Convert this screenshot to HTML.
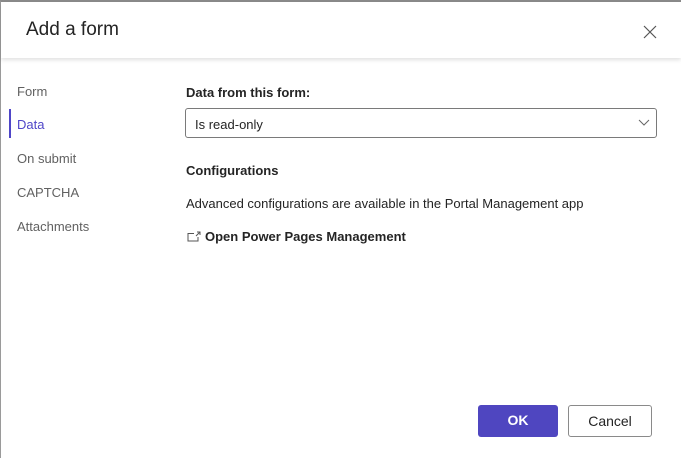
<!DOCTYPE html>
<html><head><style>
html,body{margin:0;padding:0;}
body{width:681px;height:458px;overflow:hidden;background:#fff;font-family:"Segoe UI","Liberation Sans",sans-serif;color:#242424;position:relative;}
.frame{position:absolute;left:0;top:0;width:681px;height:458px;box-sizing:border-box;border-top:2px solid #8a8a8a;border-left:1px solid #9a9a9a;}
.hdr{position:absolute;left:1px;top:2px;width:680px;height:56px;box-shadow:0 2px 4px rgba(0,0,0,0.12);background:#fff;}
.title{position:absolute;left:25px;top:17px;font-size:19px;color:#242424;}
.close{position:absolute;left:642px;top:23px;}
.nav{position:absolute;left:17px;font-size:13px;color:#616161;}
.bar{position:absolute;left:9px;top:109px;width:2px;height:29px;background:#4f46c8;}
.t{position:absolute;left:186px;font-size:13px;}
.dd{position:absolute;left:185px;top:108px;width:472px;height:30px;box-sizing:border-box;border:1px solid #7a7a7a;border-radius:3px;}
.btn{position:absolute;top:405px;height:32px;box-sizing:border-box;border-radius:3px;font-size:14px;text-align:center;line-height:31px;}
</style></head><body>
<div class="frame"></div>
<div class="hdr"><div class="title">Add a form</div>
<svg class="close" width="14" height="14" viewBox="0 0 14 14"><path d="M1 1L13 13M13 1L1 13" stroke="#555" stroke-width="1.2"/></svg></div>
<div class="nav" style="top:84px">Form</div>
<div class="bar"></div>
<div class="nav" style="top:117px;color:#4f46c8">Data</div>
<div class="nav" style="top:151px">On submit</div>
<div class="nav" style="top:185px">CAPTCHA</div>
<div class="nav" style="top:219px">Attachments</div>
<div class="t" style="top:85px;font-weight:600">Data from this form:</div>
<div class="dd"><span style="position:absolute;left:9px;top:8px;font-size:13px">Is read-only</span>
<svg style="position:absolute;left:452px;top:10px" width="12" height="8" viewBox="0 0 12 8"><path d="M1 1L6 6L11 1" stroke="#666" fill="none" stroke-width="1"/></svg></div>
<div class="t" style="top:163px;font-weight:600">Configurations</div>
<div class="t" style="top:196px">Advanced configurations are available in the Portal Management app</div>
<svg style="position:absolute;left:187px;top:231px" width="14" height="11" viewBox="0 0 14 11"><path d="M7 2.5H1V10H11V6" stroke="#555" fill="none"/><path d="M9 5L12.5 1.5M10 1H13V4" stroke="#555" fill="none"/></svg>
<div class="t" style="top:229px;left:205px;font-weight:600">Open Power Pages Management</div>
<div class="btn" style="left:478px;width:80px;background:#4f46c0;color:#fff;font-weight:600">OK</div>
<div class="btn" style="left:568px;width:84px;border:1px solid #8a8a8a;color:#242424">Cancel</div>
</body></html>
